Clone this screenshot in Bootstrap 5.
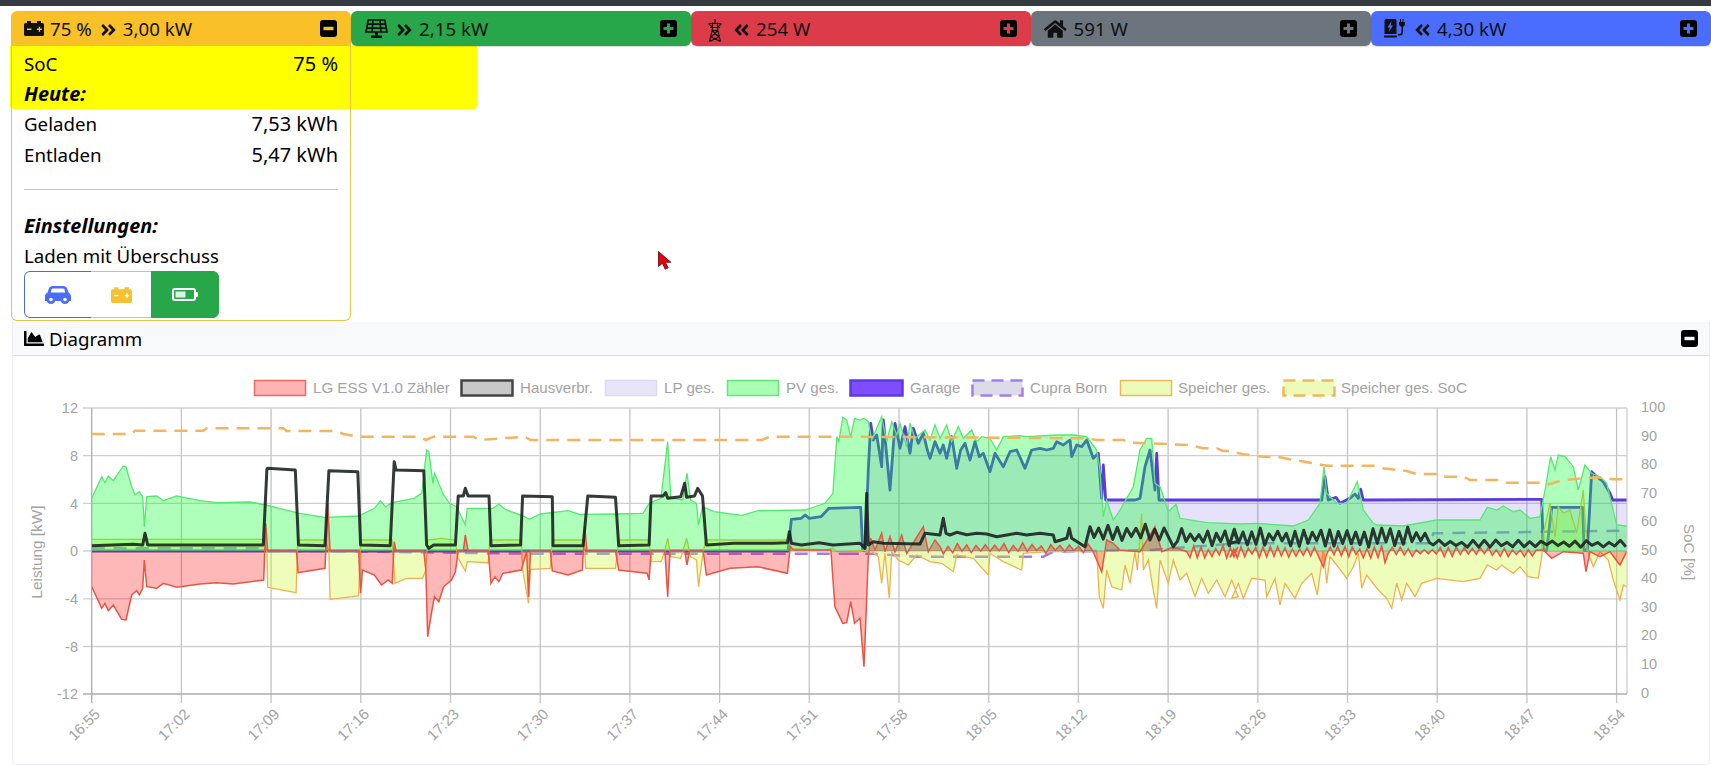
<!DOCTYPE html>
<html lang="de">
<head>
<meta charset="utf-8">
<title>Energie Übersicht</title>
<link href="https://cdn.jsdelivr.net/npm/bootstrap@5.3.0/dist/css/bootstrap.min.css" rel="stylesheet">
<style>
html{height:765px;overflow:hidden;background:#fff}
body{height:765px;overflow:hidden;background:transparent;font-family:"Noto Sans","Open Sans",sans-serif;font-size:18.7px;color:#000;line-height:31px}
.top-strip{height:6px;background:#343a40}
.tile-row{padding:5px 1px 0 11px;height:316px}
.tile{flex:0 0 340px;position:relative}
.tile-head{height:35px;border-radius:6px 6px 0 0;padding:0 14px 0 13px;color:#111}
.tile-closed .tile-head{border-radius:6px;box-shadow:0 1px 1px rgba(0,0,0,.15)}
.c-bat{background:#f9c127}.c-pv{background:#27a74a}.c-grid{background:#dc3c4a}.c-home{background:#6c757d}.c-cp{background:#4a6cff}
.ic-head{height:20px;width:auto;fill:#111;flex:none}
.ic-chev{height:18px;width:17px;fill:#111;flex:none;margin:2px 6px 0 0}
.sq{width:17px;height:17px;flex:none;margin-left:auto}
.tile-open{border:1px solid #e8c34a;border-top:0;border-radius:0 0 6px 6px;padding:2px 12px 2px 12px;height:275px;width:340px}
.bold-it{font-weight:700;font-style:italic;font-size:19.9px}
.val-text{font-size:20px}
.short-row{line-height:29px}
.mode-label{line-height:29px;margin-bottom:1px}
.rule-line{border-top:1px solid #e6c65a;margin:19px 0 20px}
.yellow-mark{position:absolute;left:-1px;top:35px;width:467px;height:63px;background:#ff0;border-radius:0 0 4px 4px;z-index:-1}
.mode-group .btn{height:47px;padding:0;margin-left:0;display:flex;align-items:center;justify-content:center;background:#fff;flex:none}
.mode-group .m-car{width:68px;border:1px solid #4a6cdc;border-radius:6px 0 0 6px}
.mode-group .m-bat{width:61px;border:1px solid #e8c34a;border-left:0;border-radius:0}
.mode-group .m-pv{width:68px;border:1px solid #27a74a;border-radius:0 6px 6px 0;background:#27a74a}
.chart-card{margin:0 1px 0 12px;height:443px;border:1px solid #eceeef;border-top:0;border-radius:0 0 4px 4px}
.chart-head{height:34px;background:#f8f9fa;border-bottom:1px solid #dcdcdc;padding:0 11px;gap:5px}
.chart-svg{display:block;width:1696px;height:408px}
.lg{font:15.1px "Liberation Sans",Arial,sans-serif;fill:#a3a3a3}
.tk{font:14.5px "Liberation Sans",Arial,sans-serif;fill:#a3a3a3}
.tk-x{font:15px "Liberation Sans",Arial,sans-serif;fill:#a3a3a3}
.tk-title{font:15.4px "Liberation Sans",Arial,sans-serif;fill:#a3a3a3}
.mouse-arrow{position:absolute;left:658px;top:251px;width:14px;height:19px}
</style>
</head>
<body>
<svg width="0" height="0" class="position-absolute">
<defs>
<symbol id="chev-r" viewBox="0 0 448 512"><path d="M224.3 273l-136 136c-9.4 9.4-24.6 9.4-33.9 0l-22.6-22.6c-9.4-9.4-9.4-24.6 0-33.9l96.4-96.4-96.4-96.4c-9.4-9.4-9.4-24.6 0-33.9L54.3 103c9.4-9.4 24.6-9.4 33.9 0l136 136c9.5 9.4 9.5 24.6.1 34zm192-34l-136-136c-9.4-9.4-24.6-9.4-33.9 0l-22.6 22.6c-9.4 9.4-9.4 24.6 0 33.9l96.4 96.4-96.4 96.4c-9.4 9.4-9.4 24.6 0 33.9l22.6 22.6c9.4 9.4 24.6 9.4 33.9 0l136-136c9.4-9.2 9.4-24.4 0-33.8z"/></symbol>
<symbol id="chev-l" viewBox="0 0 448 512"><path transform="translate(448 0) scale(-1 1)" d="M224.3 273l-136 136c-9.4 9.4-24.6 9.4-33.9 0l-22.6-22.6c-9.4-9.4-9.4-24.6 0-33.9l96.4-96.4-96.4-96.4c-9.4-9.4-9.4-24.6 0-33.9L54.3 103c9.4-9.4 24.6-9.4 33.9 0l136 136c9.5 9.4 9.5 24.6.1 34zm192-34l-136-136c-9.4-9.4-24.6-9.4-33.9 0l-22.6 22.6c-9.4 9.4-9.4 24.6 0 33.9l96.4 96.4-96.4 96.4c-9.4 9.4-9.4 24.6 0 33.9l22.6 22.6c9.4 9.4 24.6 9.4 33.9 0l136-136c9.4-9.2 9.4-24.4 0-33.8z"/></symbol>
</defs>
</svg>

<div class="top-strip"></div>

<div class="tile-row d-flex align-items-start">
  <div class="tile">
    <div class="yellow-mark"></div>
    <div class="tile-head c-bat d-flex align-items-center">
      <svg class="ic-head" viewBox="0 0 20 15" style="height:15px;margin-right:6px"><path fill-rule="evenodd" d="M3 0h4v2h6V0h4v2h1.500A1.500 1.500 0 0 1 20 3.500v10a1.500 1.500 0 0 1-1.500 1.500h-17A1.500 1.500 0 0 1 0 13.500v-10A1.500 1.500 0 0 1 1.500 2H3zM3 7.500v1.400h4.500V7.500zM13 7.500v1.400h1.700V10.700h1.400V8.900h1.700V7.500h-1.700V5.800h-1.400v1.700z"/></svg>
      <span>75 %</span>
      <svg class="ic-chev ms-2"><use href="#chev-r"/></svg>
      <span>3,00 kW</span>
      <svg class="sq" viewBox="0 0 17 17"><rect width="17" height="17" rx="3" fill="#000"/><rect x="3.500" y="6.800" width="10" height="3.400" fill="#f9c127"/></svg>
    </div>
    <div class="tile-open">
      <div class="d-flex justify-content-between"><span>SoC</span><span class="val-text">75 %</span></div>
      <div class="bold-it short-row">Heute:</div>
      <div class="d-flex justify-content-between"><span>Geladen</span><span class="val-text">7,53 kWh</span></div>
      <div class="d-flex justify-content-between"><span>Entladen</span><span class="val-text">5,47 kWh</span></div>
      <div class="rule-line"></div>
      <div class="bold-it">Einstellungen:</div>
      <div class="mode-label">Laden mit Überschuss</div>
      <div class="btn-group mode-group" role="group">
        <button class="btn m-car" type="button" aria-label="Fahrzeug"><svg width="26" height="18" viewBox="0 0 26 18"><path fill="#4a6cff" d="M7.500 0h11c1.700 0 3 .9 3.600 2.500L23.500 6.500C25 7.300 26 8.800 26 10.500V15H0v-4.500C0 8.800 1 7.300 2.500 6.500L3.900 2.500C4.500.9 5.800 0 7.500 0z"/><path fill="#fff" d="M7.800 2.500h10.400c.5 0 .9.300 1.100.8l1 3.200H5.700l1-3.200c.2-.5.600-.8 1.100-.8z"/><circle cx="6" cy="13.500" r="4.500" fill="#4a6cff"/><circle cx="20" cy="13.500" r="4.500" fill="#4a6cff"/><circle cx="6" cy="13.500" r="1.800" fill="#fff"/><circle cx="20" cy="13.500" r="1.800" fill="#fff"/></svg></button>
        <button class="btn m-bat" type="button" aria-label="Speicher"><svg width="21" height="16" viewBox="0 0 20 15"><path fill="#f5c033" fill-rule="evenodd" d="M3 0h4v2h6V0h4v2h1.500A1.500 1.500 0 0 1 20 3.500v10a1.500 1.500 0 0 1-1.500 1.500h-17A1.500 1.500 0 0 1 0 13.500v-10A1.500 1.500 0 0 1 1.500 2H3zM3 7.500v1.200h4V7.500zM13 7.500v1.200h1.600V10.300h1.200V8.700h1.600V7.500h-1.600V5.900h-1.200v1.600z"/></svg></button>
        <button class="btn m-pv" type="button" aria-label="Überschuss"><svg width="26" height="13" viewBox="0 0 26 13"><rect x="1" y="1" width="22" height="11" rx="2" fill="none" stroke="#fff" stroke-width="2"/><rect x="3.500" y="3.500" width="10" height="6" fill="#fff" opacity=".85"/><rect x="23" y="4" width="3" height="5" rx="1" fill="#fff"/></svg></button>
      </div>
    </div>
  </div>

  <div class="tile tile-closed">
    <div class="tile-head c-pv d-flex align-items-center">
      <svg class="ic-head" viewBox="0 0 23 20" style="margin:0 8px 0 1px"><path fill="none" stroke="#111" stroke-width="1.700" d="M3.200 1h16.600l2.200 12H1zM2.400 5.200h18.200M1.800 9.200h19.400M8 1L7 13M15 1l1 12"/><path d="M10 13h3v3.500h4V19H6v-2.500h4z"/></svg>
      <svg class="ic-chev"><use href="#chev-r"/></svg>
      <span>2,15 kW</span>
      <svg class="sq" viewBox="0 0 17 17"><rect width="17" height="17" rx="3" fill="#000"/><path fill="#27a74a" d="M7 3.500h3V7h3.500v3H10v3.500H7V10H3.500V7H7z"/></svg>
    </div>
  </div>

  <div class="tile tile-closed">
    <div class="tile-head c-grid d-flex align-items-center">
      <svg class="ic-head" viewBox="0 0 16 23" style="height:23px;margin:3px 10px 0 3px"><path fill="none" stroke="#111" stroke-width="1.100" d="M8 0v5M1.500 4.500h13M3 8.500h10M1.500 4.500L5.500 8.500M14.500 4.500L10.500 8.500M5.500 3.500l-.3 8L2.500 22.500M10.500 3.500l.3 8 2.700 11M5.200 11.500h5.600M5.200 11.500l6.700 6.500M10.800 11.500L4.100 18M4.100 18l9.400 4.500M11.900 18L2.500 22.500"/></svg>
      <svg class="ic-chev"><use href="#chev-l"/></svg>
      <span>254 W</span>
      <svg class="sq" viewBox="0 0 17 17"><rect width="17" height="17" rx="3" fill="#000"/><path fill="#dc3c4a" d="M7 3.500h3V7h3.500v3H10v3.500H7V10H3.500V7H7z"/></svg>
    </div>
  </div>

  <div class="tile tile-closed">
    <div class="tile-head c-home d-flex align-items-center">
      <svg class="ic-head" viewBox="0 0 576 512" style="height:20px;margin-right:7px"><path d="M280.370 148.260L96 300.110V464a16 16 0 0 0 16 16l112.060-.29a16 16 0 0 0 15.920-16V368a16 16 0 0 1 16-16h64a16 16 0 0 1 16 16v95.640a16 16 0 0 0 16 16.050L464 480a16 16 0 0 0 16-16V300L295.670 148.260a12.190 12.190 0 0 0-15.300 0zM571.600 251.470L488 182.560V44.050a12 12 0 0 0-12-12h-56a12 12 0 0 0-12 12v72.610L318.470 43a48 48 0 0 0-61 0L4.340 251.470a12 12 0 0 0-1.600 16.900l25.500 31A12 12 0 0 0 45.150 301l235.220-193.740a12.190 12.190 0 0 1 15.300 0L530.900 301a12 12 0 0 0 16.900-1.600l25.500-31a12 12 0 0 0-1.700-16.930z"/></svg>
      <span>591 W</span>
      <svg class="sq" viewBox="0 0 17 17"><rect width="17" height="17" rx="3" fill="#000"/><path fill="#6c757d" d="M7 3.500h3V7h3.500v3H10v3.500H7V10H3.500V7H7z"/></svg>
    </div>
  </div>

  <div class="tile tile-closed">
    <div class="tile-head c-cp d-flex align-items-center">
      <svg class="ic-head" viewBox="0 0 22 19" style="height:19px;margin-right:8px"><path fill-rule="evenodd" d="M2 0h9a1.500 1.500 0 0 1 1.500 1.500V15H.5V1.500A1.500 1.500 0 0 1 2 0zM7.500 2L3.500 8.500h2.300L4.800 13l4.200-6.500H6.700z"/><rect y="16.500" width="13" height="2" rx=".5"/><path d="M16 0h1v3h1.500V0h1v3H21v2a3 3 0 0 1-2 2.800V13a3.500 3.500 0 0 1-3.500 3.500H14v-1.500h1.500a2 2 0 0 0 2-2V7.800A3 3 0 0 1 15 5V3h1z"/></svg>
      <svg class="ic-chev"><use href="#chev-l"/></svg>
      <span>4,30 kW</span>
      <svg class="sq" viewBox="0 0 17 17"><rect width="17" height="17" rx="3" fill="#000"/><path fill="#4a6cff" d="M7 3.500h3V7h3.500v3H10v3.500H7V10H3.500V7H7z"/></svg>
    </div>
  </div>
</div>

<div class="chart-card">
  <div class="chart-head d-flex align-items-center">
    <svg width="20" height="15" viewBox="0 64 512 384"><path d="M500 384c6.600 0 12 5.400 12 12v40c0 6.600-5.400 12-12 12H12c-6.600 0-12-5.400-12-12V76c0-6.600 5.400-12 12-12h40c6.600 0 12 5.400 12 12v308h436zM372.700 159.500L288 216l-85.300-113.700c-5.100-6.800-15.500-6.300-19.900 1L96 248v104h384l-67.900-181.100c-3.200-12.800-18.300-18.300-28.800-11.400z"/></svg>
    <span>Diagramm</span>
    <svg class="sq" viewBox="0 0 17 17"><rect width="17" height="17" rx="3" fill="#000"/><rect x="3.500" y="6.800" width="10" height="3.400" fill="#f8f9fa"/></svg>
  </div>
  <svg class="chart-svg" viewBox="13 356 1696 408" xmlns="http://www.w3.org/2000/svg">
    <defs><clipPath id="plot"><rect x="91.700" y="408" width="1535" height="286"/></clipPath></defs>
    <g stroke-width="1.500">
      <rect x="254.500" y="380.500" width="51" height="15" fill="#ffb3b3" stroke="#ee6a60"/>
      <rect x="461.500" y="380.500" width="51" height="15" fill="#c8c8c8" stroke="#444" stroke-width="2.500"/>
      <rect x="605.500" y="380.500" width="51" height="15" fill="#e8e5fb" stroke="#dcd8f0"/>
      <rect x="727.500" y="380.500" width="51" height="15" fill="#aaffb5" stroke="#5fe87a"/>
      <rect x="850.500" y="380.500" width="52" height="15" fill="#7d4dff" stroke="#5b3be0" stroke-width="2.500"/>
      <rect x="972.500" y="380.500" width="50" height="15" fill="#dedbe8" stroke="#9f7fee" stroke-width="2.500" stroke-dasharray="12 7"/>
      <rect x="1120.500" y="380.500" width="51" height="15" fill="#ecfcb8" stroke="#f0b85c"/>
      <rect x="1283.500" y="380.500" width="51" height="15" fill="#ecfcb8" stroke="#f0b85c" stroke-width="2.500" stroke-dasharray="12 7"/>
    </g>
    <g class="lg">
      <text x="313" y="393">LG ESS V1.0 Zähler</text>
      <text x="520" y="393">Hausverbr.</text>
      <text x="664" y="393">LP ges.</text>
      <text x="786" y="393">PV ges.</text>
      <text x="910" y="393">Garage</text>
      <text x="1030" y="393">Cupra Born</text>
      <text x="1178" y="393">Speicher ges.</text>
      <text x="1341" y="393">Speicher ges. SoC</text>
    </g>
    <path fill="none" stroke="#cfcfcf" stroke-width="1.300" d="M83 408H1627M83 455.700H1627M83 503.400H1627M83 551H1627M83 598.800H1627M83 646.500H1627M1627 408V694"/>
    <path fill="none" stroke="#c4c4c4" stroke-width="1.300" d="M181.400 408V703M271.100 408V703M360.800 408V703M450.500 408V703M540.200 408V703M629.900 408V703M719.600 408V703M809.300 408V703M899 408V703M988.700 408V703M1078.400 408V703M1168.100 408V703M1257.800 408V703M1347.500 408V703M1437.200 408V703M1526.900 408V703M1616.600 408V703"/>
    <path fill="none" stroke="#adadad" stroke-width="1.300" d="M83 694H1627M91.700 408V703"/>
    <g id="series" clip-path="url(#plot)"></g>
    <g class="tk" text-anchor="end">
      <text x="78" y="413">12</text><text x="78" y="461">8</text><text x="78" y="509">4</text><text x="78" y="556">0</text><text x="78" y="604">-4</text><text x="78" y="652">-8</text><text x="78" y="699">-12</text>
    </g>
    <g class="tk">
      <text x="1641" y="412">100</text><text x="1641" y="441">90</text><text x="1641" y="469">80</text><text x="1641" y="498">70</text><text x="1641" y="526">60</text><text x="1641" y="555">50</text><text x="1641" y="583">40</text><text x="1641" y="612">30</text><text x="1641" y="640">20</text><text x="1641" y="669">10</text><text x="1641" y="698">0</text>
    </g>
    <text class="tk-title" text-anchor="middle" transform="translate(42 552) rotate(-90)">Leistung [kW]</text>
    <text class="tk-title" text-anchor="middle" transform="translate(1684 552) rotate(90)">SoC [%]</text>
    <g class="tk-x" text-anchor="end">
      <text transform="translate(101 715) rotate(-45)">16:55</text>
      <text transform="translate(190.700 715) rotate(-45)">17:02</text>
      <text transform="translate(280.400 715) rotate(-45)">17:09</text>
      <text transform="translate(370.100 715) rotate(-45)">17:16</text>
      <text transform="translate(459.800 715) rotate(-45)">17:23</text>
      <text transform="translate(549.500 715) rotate(-45)">17:30</text>
      <text transform="translate(639.200 715) rotate(-45)">17:37</text>
      <text transform="translate(728.900 715) rotate(-45)">17:44</text>
      <text transform="translate(818.600 715) rotate(-45)">17:51</text>
      <text transform="translate(908.300 715) rotate(-45)">17:58</text>
      <text transform="translate(998 715) rotate(-45)">18:05</text>
      <text transform="translate(1087.700 715) rotate(-45)">18:12</text>
      <text transform="translate(1177.400 715) rotate(-45)">18:19</text>
      <text transform="translate(1267.100 715) rotate(-45)">18:26</text>
      <text transform="translate(1356.800 715) rotate(-45)">18:33</text>
      <text transform="translate(1446.500 715) rotate(-45)">18:40</text>
      <text transform="translate(1536.200 715) rotate(-45)">18:47</text>
      <text transform="translate(1625.900 715) rotate(-45)">18:54</text>
    </g>
  </svg>
</div>

<svg class="mouse-arrow" viewBox="0 0 14 19"><path d="M.5.500v15l4-3.200 2.700 6 3-1.500-2.800-5.500h5.500z" fill="#e8000c" stroke="#5a0008" stroke-width=".8"/></svg>

<script>
(function(){
  var Z={a:function(x,y){return [x/3,370+y/3]},b:function(x,y){return [240+x/2.53,370+y/3]},c:function(x,y){return [840+x/3,370+y/3]},d:function(x,y){return [1230+x/3,370+y/3]}};
  var seed=7;function R(){seed=(seed*16807)%2147483647;return seed/2147483647}
  function S(k,a){var r=[];for(var i=0;i<a.length;i+=2)r.push(Z[k](a[i],a[i+1]));return r}
  function N(k,x0,x1,st,lo,hi){var r=[],up=false;for(var x=x0;x<x1;x+=st){var t=R();var y=up?lo+(hi-lo)*t*.35:hi-(hi-lo)*t*.35;r.push(Z[k](x,y));up=!up}return r}
  function J(){return [].concat.apply([],arguments)}
  function line(p){return 'M'+p.map(function(q){return q[0].toFixed(1)+' '+q[1].toFixed(1)}).join('L')}
  function area(p){var b=551;return 'M'+p[0][0].toFixed(1)+' '+b+'L'+p.map(function(q){return q[0].toFixed(1)+' '+q[1].toFixed(1)}).join('L')+'L'+p[p.length-1][0].toFixed(1)+' '+b+'Z'}

  var pv=J(S('a',[275,385,305,320,315,338,325,318,340,332,370,288,378,290,395,350,405,375,418,365,428,380,433,470,440,380,470,378,490,392,530,378,600,392,650,398,750,396]),
    S('b',[65,405,150,430,215,442,300,438,340,415,355,392,368,410,385,398,440,385,460,370,472,240,478,245,488,340,492,310,515,375,530,400,548,410,570,465,575,415,640,415,655,402,670,418,720,440,732,448,760,432,830,422,860,433,950,432,1020,430,1035,400,1065,385,1082,215,1090,385,1120,390,1131,310,1140,390,1155,400,1160,465,1170,410,1200,425,1270,436,1310,422,1430,420,1480,400,1500,370,1510,200,1515,215,1525,142,1535,150,1545,200,1555,145]),
    S('c',[60,150,72,145,85,155,95,210,125,140,140,215,155,155,170,195,180,160,200,230,210,160,225,205,255,180,270,210,285,165,300,205,320,165,335,215,355,170,370,205,395,180,410,215,425,200,450,205,470,240,490,200,540,197,560,200,650,195,700,195,740,200,770,240,780,300,790,440,800,390,820,450,840,420,880,350,900,240,920,205,935,205,945,340,960,350,985,425,1008,403,1020,445,1100,458,1200,462]),
    S('d',[80,460,190,468,235,450,270,400,282,290,290,370,320,400,350,400,382,335,400,420,430,460,440,465,520,468,620,450,750,450,772,412,800,420,820,408,850,425,870,420,900,445,930,440,945,360,962,260,975,300,985,255,1005,260,1030,290,1045,360,1065,285,1085,310,1110,320,1130,340,1160,465,1190,468]));

  var garage=J([[92,551],[788,551]],
    S('b',[1395,448,1420,445,1430,435,1440,445,1470,440,1490,415,1568,412]),
    S('c',[62,412,68,540,75,540,85,300,92,160,100,210,110,195,125,290,130,150,150,360,165,160,180,235,195,170,210,250,220,175,235,220,250,190,262,240,270,265,285,215,300,250,310,225,320,265,335,200,350,295,362,240,375,220,390,270,405,215,418,260,430,250,450,305,465,250,490,290,510,245,530,240,555,295,575,240,600,235,620,240,640,235,650,215,670,225,690,210,695,260,710,225,725,230,740,210,760,265,775,250,785,385,790,285,797,390,885,390,900,385,915,290,930,240,945,360,950,250,957,390,1200,390]),
    S('d',[275,390,285,320,295,390,318,382,330,400,360,385,375,372,385,385,392,358,400,390,935,388,940,540,950,540,965,412,1058,412,1062,540,1072,540,1085,305,1100,320,1120,335,1140,370,1148,390,1190,390]));

  var store=J(S('a',[275,508,432,508,437,495,442,508,790,508]),
    S('b',[68,545,70,652,142,668,146,510,215,510,225,545,228,688,300,678,305,510,385,510,392,640,420,625,462,625,470,600,475,510,510,505,545,510,550,560,570,603,575,575,628,578,632,510,712,510,715,598,730,700,735,598,785,595,790,510,870,510,875,595,950,595,958,510,1035,510,1040,575,1065,575,1072,555,1082,505,1090,560,1115,565,1130,505,1140,560,1155,570,1160,650,1170,560,1178,510,1390,510,1395,535,1480,540,1500,535,1510,545]),
    S('c',[90,540,115,560,125,640,135,550,148,685,155,545,175,570,205,585,230,555,270,575,305,580,340,605,350,555,400,565,445,615,450,550,490,575,545,600,550,550,620,545,770,545,778,680,790,715,800,600,815,650,845,660,855,585,870,640,885,545,892,600,905,430,910,600,925,570,938,650,950,715,960,570,985,640,1000,570,1020,630,1040,610,1065,680,1085,625,1105,670,1130,630,1155,680,1175,630,1195,680]),
    S('d',[5,685,25,640,40,685,65,625,105,630,110,680,135,625,150,705,165,640,195,685,215,640,245,610,262,675,280,540,290,640,300,560,320,585,350,625,370,590,385,550,395,655,410,615,445,660,470,685,485,715,500,640,515,690,530,640,555,680,575,640,620,625,700,635,750,625,772,585,800,600,815,585,850,610,870,590,895,620,925,625,935,560,940,490,960,400,975,500,985,410,1000,430,1020,420,1040,490,1060,360,1072,540,1090,590,1110,545,1135,570,1150,630,1170,690,1180,645,1190,650]));

  var grid=J(S('a',[275,650,305,715,315,700,325,722,340,705,365,748,378,750,395,675,410,662,418,675,428,655,433,570,440,650,470,655,490,640,530,652,600,642,650,638,700,642]),
    S('b',[60,630,65,460,70,543,143,543,147,608,215,595,222,400,228,543,300,543,305,670,310,600,340,615,358,645,375,630,385,640,390,515,395,543,465,543,470,600,475,800,485,725,492,680,503,695,515,650,535,630,545,605,552,543,565,543,570,495,577,543,628,543,635,640,645,620,655,635,665,610,712,600,725,543,730,680,735,543,785,543,790,603,830,615,866,600,872,470,878,543,950,543,958,600,1030,610,1035,630,1040,543,1075,543,1082,680,1088,543,1125,543,1131,585,1137,543,1172,543,1180,615,1240,595,1310,590,1385,610,1392,530,1400,540,1495,540,1505,710,1525,760,1535,758,1545,695,1555,760]),
    S('c',[60,745,72,890,85,560,92,505,105,540,125,490,135,545,150,500,165,545,185,495,200,550,225,510,250,470,265,545,285,510,300,530]),
    N('c',310,770,14,518,552),
    S('c',[785,605,800,510,820,520,840,540,900,545,945,470,965,545,1000,530,1040,545]),
    N('c',1050,1200,11,525,568),
    N('d',0,275,11,525,565),S('d',[280,590]),N('d',290,460,11,525,565),S('d',[465,578]),N('d',475,930,12,530,560),
    S('d',[940,540,965,565,1000,545,1060,550,1068,605,1080,545,1110,560,1140,545,1170,585,1190,545]));

  var house=J(S('a',[275,527,400,523,428,525,435,490,443,525,790,525]),
    S('b',[68,298,70,295,140,300,148,525,215,527,225,302,298,305,305,525,380,527,390,275,395,300,465,302,472,525,478,535,490,525,545,525,552,378,565,378,570,355,577,378,630,378,635,527,710,525,715,378,790,380,792,527,868,527,880,378,950,382,958,527,1035,525,1040,378,1070,378,1077,368,1082,385,1115,380,1125,340,1130,382,1150,378,1158,355,1170,378,1180,525,1250,520,1350,520,1385,518,1390,485,1395,520,1420,525,1465,518,1500,525,1568,520]),
    S('c',[60,520,75,535,80,370,85,525,100,515,130,520,240,522,255,490,300,495,310,445,318,490,330,495,350,487,380,494,410,490,440,492,470,500,500,495,530,490,560,495,600,490,640,495,645,515,680,505,688,475,695,505,735,530,750,470]),
    N('c',762,985,14,462,512),S('c',[1000,530]),N('c',1012,1200,13,475,532),
    N('d',0,600,13,470,532),N('d',610,1190,17,510,532));

  var soc=J(S('a',[275,192,395,192,405,182,610,182,620,175,850,175,860,182]),
    S('b',[118,183,240,183,262,192,300,200,455,200,470,210,490,200,590,200,605,210,720,200,735,210,1320,210,1340,200]),
    S('c',[0,200,740,205,770,210,850,210,870,218,1050,225,1090,235,1130,235,1150,243]),
    S('d',[0,243,40,253,100,260,150,262,180,268,240,278,290,287,430,287,460,295,530,303,560,312,625,312,640,320,700,320,720,330,810,330,830,338,930,338,950,345,1000,330,1100,322,1150,328,1190,328]));

  var cupra=J(S('a',[275,535,790,535,800,543]),S('b',[100,543,200,543,730,551,1568,551]),S('c',[0,551,100,551,230,560,610,560,640,545,940,540]),S('c',[990,535,1200,520]),S('d',[0,520,600,520,610,490,1190,482]));

  function add(tag,attrs){var e=document.createElementNS('http://www.w3.org/2000/svg',tag);for(var k in attrs)e.setAttribute(k,attrs[k]);document.getElementById('series').appendChild(e)}
  add('path',{d:area(garage),fill:'rgba(80,50,230,.14)'});
  add('path',{d:area(cupra),fill:'rgba(120,120,140,.04)'});
  add('path',{d:line(cupra),fill:'none',stroke:'#9f7fee','stroke-width':2.5,'stroke-dasharray':'13 9'});
  add('path',{d:line(garage),fill:'none',stroke:'#5b3be0','stroke-width':2.8,'stroke-linejoin':'round'});
  add('path',{d:area(store),fill:'rgba(205,250,40,.32)'});
  add('path',{d:line(store),fill:'none',stroke:'#efb24f','stroke-width':1.3});
  add('path',{d:area(pv),fill:'rgba(0,255,40,.32)'});
  add('path',{d:line(pv),fill:'none',stroke:'#55e870','stroke-width':1.3});
  add('path',{d:area(grid),fill:'rgba(255,0,0,.28)'});
  add('path',{d:line(grid),fill:'none',stroke:'#ea5444','stroke-width':1.5});
  add('path',{d:line(soc),fill:'none',stroke:'#f4b55f','stroke-width':2.5,'stroke-dasharray':'13 8'});
  add('path',{d:line(house),fill:'none',stroke:'rgba(25,30,30,.88)','stroke-width':3,'stroke-linejoin':'round'});
})();
</script>
</body>
</html>
